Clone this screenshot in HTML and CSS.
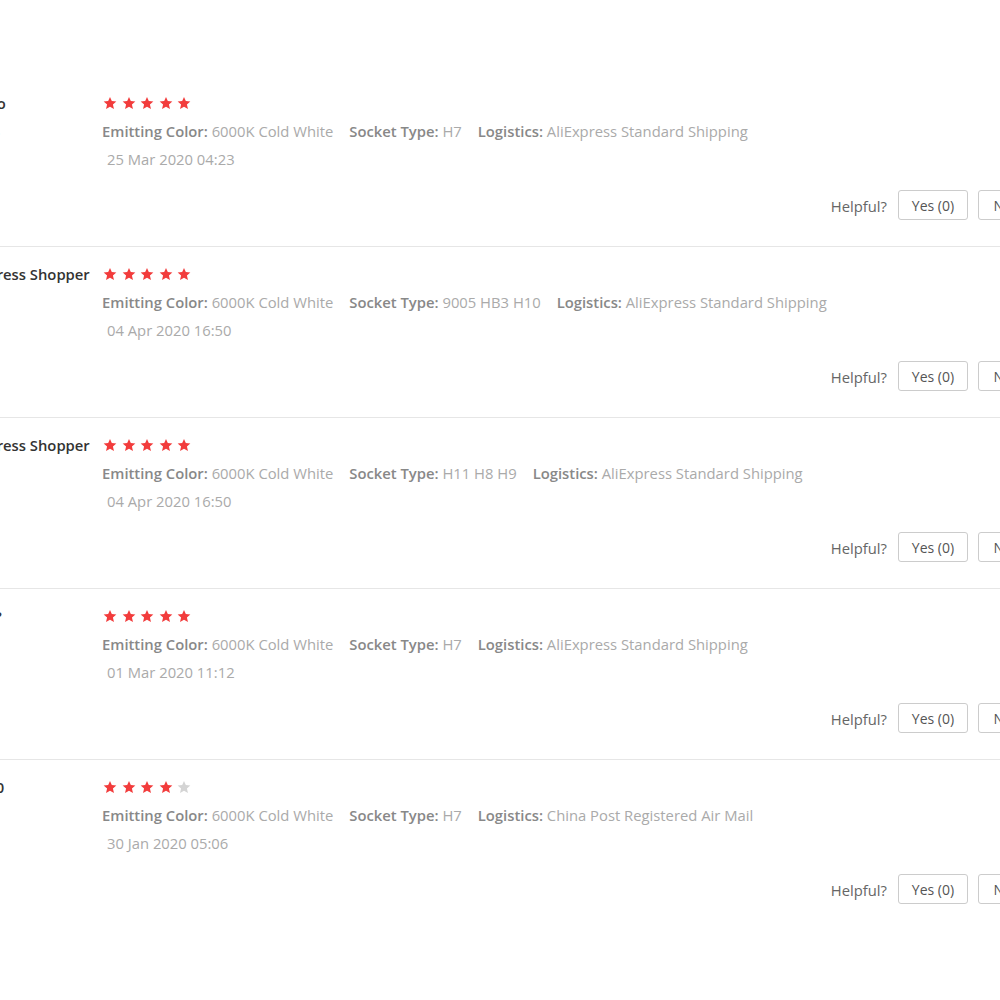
FILE: index.html
```html
<!DOCTYPE html>
<html>
<head>
<meta charset="utf-8">
<link rel="stylesheet" href="styles.css">
</head>
<body>
<svg width="0" height="0" class="defs">
  <defs>
    <symbol id="star" viewBox="0 0 24 24"><path d="M12 1.5l3.1 7.2 7.8.7-5.9 5.2 1.8 7.7L12 18.3l-6.8 4 1.8-7.7-5.9-5.2 7.8-.7z"/></symbol>
  </defs>
</svg>
<div class="list">
  <div class="review">
    <div class="user">
      <div class="name">D***ko</div>
      <div class="country"><span class="flag"></span>US</div>
    </div>
    <div class="content">
      <div class="stars"><svg class="s on"><use href="#star"/></svg><svg class="s on"><use href="#star"/></svg><svg class="s on"><use href="#star"/></svg><svg class="s on"><use href="#star"/></svg><svg class="s on"><use href="#star"/></svg></div>
      <div class="attrs"><span class="attr"><b>Emitting Color:</b> 6000K Cold White</span><span class="attr"><b>Socket Type:</b> H7</span><span class="attr"><b>Logistics:</b> AliExpress Standard Shipping</span></div>
      <div class="date">25 Mar 2020 04:23</div>
      <div class="helpful"><span class="hlabel">Helpful?</span><button class="btn">Yes (0)</button><button class="btn">No (0)</button></div>
    </div>
  </div>
  <div class="review">
    <div class="user">
      <div class="name">AliExpress Shopper</div>
      <div class="country"><span class="flag"></span>IT</div>
    </div>
    <div class="content">
      <div class="stars"><svg class="s on"><use href="#star"/></svg><svg class="s on"><use href="#star"/></svg><svg class="s on"><use href="#star"/></svg><svg class="s on"><use href="#star"/></svg><svg class="s on"><use href="#star"/></svg></div>
      <div class="attrs"><span class="attr"><b>Emitting Color:</b> 6000K Cold White</span><span class="attr"><b>Socket Type:</b> 9005 HB3 H10</span><span class="attr"><b>Logistics:</b> AliExpress Standard Shipping</span></div>
      <div class="date">04 Apr 2020 16:50</div>
      <div class="helpful"><span class="hlabel">Helpful?</span><button class="btn">Yes (0)</button><button class="btn">No (0)</button></div>
    </div>
  </div>
  <div class="review">
    <div class="user">
      <div class="name">AliExpress Shopper</div>
      <div class="country"><span class="flag"></span>IT</div>
    </div>
    <div class="content">
      <div class="stars"><svg class="s on"><use href="#star"/></svg><svg class="s on"><use href="#star"/></svg><svg class="s on"><use href="#star"/></svg><svg class="s on"><use href="#star"/></svg><svg class="s on"><use href="#star"/></svg></div>
      <div class="attrs"><span class="attr"><b>Emitting Color:</b> 6000K Cold White</span><span class="attr"><b>Socket Type:</b> H11 H8 H9</span><span class="attr"><b>Logistics:</b> AliExpress Standard Shipping</span></div>
      <div class="date">04 Apr 2020 16:50</div>
      <div class="helpful"><span class="hlabel">Helpful?</span><button class="btn">Yes (0)</button><button class="btn">No (0)</button></div>
    </div>
  </div>
  <div class="review">
    <div class="user">
      <div class="name">M***l?</div>
      <div class="country"><span class="flag"></span>IT</div>
    </div>
    <div class="content">
      <div class="stars"><svg class="s on"><use href="#star"/></svg><svg class="s on"><use href="#star"/></svg><svg class="s on"><use href="#star"/></svg><svg class="s on"><use href="#star"/></svg><svg class="s on"><use href="#star"/></svg></div>
      <div class="attrs"><span class="attr"><b>Emitting Color:</b> 6000K Cold White</span><span class="attr"><b>Socket Type:</b> H7</span><span class="attr"><b>Logistics:</b> AliExpress Standard Shipping</span></div>
      <div class="date">01 Mar 2020 11:12</div>
      <div class="helpful"><span class="hlabel">Helpful?</span><button class="btn">Yes (0)</button><button class="btn">No (0)</button></div>
    </div>
  </div>
  <div class="review">
    <div class="user">
      <div class="name">R***o0</div>
      <div class="country"><span class="flag"></span>FR</div>
    </div>
    <div class="content">
      <div class="stars"><svg class="s on"><use href="#star"/></svg><svg class="s on"><use href="#star"/></svg><svg class="s on"><use href="#star"/></svg><svg class="s on"><use href="#star"/></svg><svg class="s off"><use href="#star"/></svg></div>
      <div class="attrs"><span class="attr"><b>Emitting Color:</b> 6000K Cold White</span><span class="attr"><b>Socket Type:</b> H7</span><span class="attr"><b>Logistics:</b> China Post Registered Air Mail</span></div>
      <div class="date">30 Jan 2020 05:06</div>
      <div class="helpful"><span class="hlabel">Helpful?</span><button class="btn">Yes (0)</button><button class="btn">No (0)</button></div>
    </div>
  </div>
</div>
</body>
</html>
```
FILE: styles.css
```css
html, body {
  margin: 0;
  padding: 0;
  background: #fff;
  overflow: hidden;
}
body {
  width: 1000px;
  height: 1000px;
  font-family: "Open Sans", "Liberation Sans", sans-serif;
  font-size: 14.8px;
  color: #999;
}
.defs {
  position: absolute;
  width: 0;
  height: 0;
}
.list {
  margin-left: -47px;
  width: 1095px;
  padding-top: 76px;
}
.review {
  display: flex;
  padding: 18px 0 26px;
  border-bottom: 1px solid #e6e6e6;
}
.review:last-child {
  border-bottom: none;
}
.user {
  width: 149px;
  flex: none;
  line-height: 18px;
}
.name {
  color: #333;
  font-weight: 600;
  white-space: nowrap;
  height: 18px;
}
.country {
  margin-top: 10px;
  color: #666;
  font-weight: 600;
  display: flex;
  align-items: center;
  gap: 6px;
  white-space: nowrap;
}
.flag {
  display: inline-block;
  width: 22px;
  height: 14px;
  background: #ddd;
}
.content {
  flex: 1;
  display: flex;
  flex-direction: column;
}
.stars {
  display: flex;
  gap: 4.5px;
  height: 18px;
  align-items: center;
  margin-left: 1px;
}
.s {
  width: 14px;
  height: 14px;
}
.s.on { fill: #f23c3c; }
.s.off { fill: #d4d4d4; }
.attrs {
  margin-top: 10px;
  display: flex;
  gap: 16px;
  line-height: 18px;
  color: #aaa;
  white-space: nowrap;
}
.attr b {
  color: #888;
  font-weight: 600;
}
.date {
  margin-top: 10px;
  margin-left: 5px;
  line-height: 18px;
  color: #aaa;
}
.helpful {
  margin-top: 22px;
  display: flex;
  justify-content: flex-end;
  align-items: center;
  gap: 10px;
}
.hlabel {
  color: #666;
  margin-right: 1px;
  margin-top: 2px;
}
.btn {
  font-family: inherit;
  font-size: 14px;
  color: #555;
  background: #fff;
  border: 1px solid #ccc;
  border-radius: 3px;
  height: 30px;
  width: 70px;
  padding: 0;
}
```
